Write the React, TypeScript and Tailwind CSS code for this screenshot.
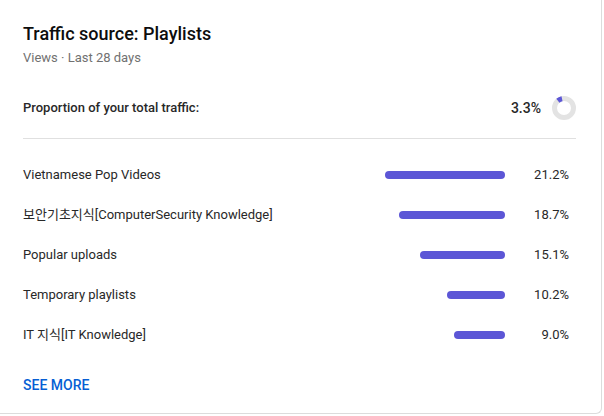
import React from "react";

const rows = [
  { label: "Vietnamese Pop Videos", pct: 21.2 },
  { label: "보안기초지식[ComputerSecurity Knowledge]", pct: 18.7 },
  { label: "Popular uploads", pct: 15.1 },
  { label: "Temporary playlists", pct: 10.2 },
  { label: "IT 지식[IT Knowledge]", pct: 9.0 },
];

function Donut() {
  return (
    <svg width="24" height="24" viewBox="0 0 24 24">
      <circle cx="12" cy="12" r="9.5" fill="none" stroke="#e3e3e3" strokeWidth="5" />
      <path d="M5.89 4.72 A9.5 9.5 0 0 1 10.02 2.71" fill="none" stroke="#5c56d6" strokeWidth="5" />
    </svg>
  );
}

export default function App() {
  return (
    <div
      className="w-[602px] h-[414px] bg-white border-r border-b border-[#dcdcdc] rounded-br-[6px] pl-[23px] pr-[25px] pt-5 text-[#282828]"
      style={{ fontFamily: "Roboto, 'Noto Sans CJK KR', sans-serif" }}
    >
      <div className="text-[18px] leading-[28px] font-medium text-[#0d0d0d]">Traffic source: Playlists</div>
      <div className="text-[13px] leading-[20px] text-[#717171]">Views · Last 28 days</div>

      <div className="mt-[28px] h-[24px] flex items-center">
        <div className="flex-1 text-[13px] font-medium text-[#282828]">Proportion of your total traffic:</div>
        <div className="text-[14px] font-medium text-[#282828] mr-[11px]">3.3%</div>
        <Donut />
      </div>

      <div className="mt-[18px] h-px bg-[#e0e0e0]" />

      <div className="mt-[16px]">
        {rows.map((r) => (
          <div key={r.label} className="h-[40px] flex items-center">
            <div className="flex-1 text-[13px] text-[#282828]">{r.label}</div>
            <div className="w-[120px] flex justify-end">
              <div
                className="h-[8px] rounded-full bg-[#5c56d6]"
                style={{ width: `${Math.round((r.pct / 21.2) * 120)}px` }}
              />
            </div>
            <div className="w-[64px] text-right text-[13px] text-[#282828]">{r.pct.toFixed(1)}%</div>
            <div className="w-[7px]" />
          </div>
        ))}
      </div>

      <div className="mt-[20px] text-[14px] leading-[20px] font-medium text-[#065fd4]">SEE MORE</div>
    </div>
  );
}
